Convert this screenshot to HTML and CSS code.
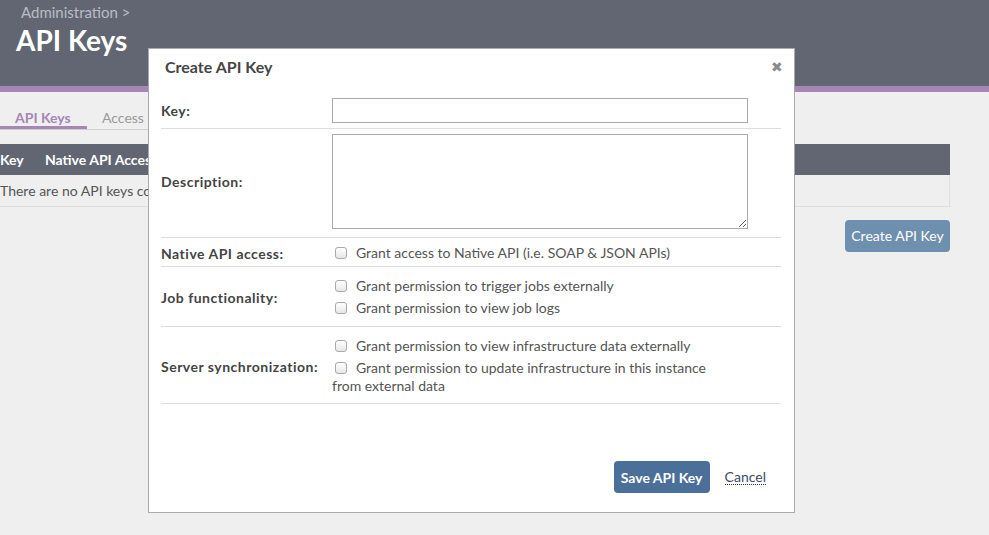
FILE: index.html
```html
<!DOCTYPE html>
<html>
<head>
<meta charset="utf-8">
<link rel="stylesheet" href="styles.css">
</head>
<body>
<header class="page-header">
  <div class="crumb">Administration &gt;</div>
  <h1 class="title">API Keys</h1>
</header>
<main class="page">
  <nav class="tabs">
    <span class="tab active">API Keys</span>
    <span class="tab">Access Control</span>
  </nav>
  <table class="keys">
    <thead>
      <tr><th class="c-key">Key</th><th>Native API Access</th><th></th></tr>
    </thead>
    <tbody>
      <tr><td colspan="3">There are no API keys configured.</td></tr>
    </tbody>
  </table>
  <div class="actions">
    <button class="btn btn-light">Create API Key</button>
  </div>
</main>

<div class="modal">
  <div class="modal-head">
    <span class="modal-title">Create API Key</span>
    <span class="close">&#x2716;</span>
  </div>
  <div class="modal-body">
    <div class="row row-key">
      <label class="lbl">Key:</label>
      <div class="field"><input type="text" class="text-in"></div>
    </div>
    <div class="row row-desc">
      <label class="lbl">Description:</label>
      <div class="field"><textarea class="text-area"></textarea></div>
    </div>
    <div class="row row-native">
      <label class="lbl">Native API access:</label>
      <div class="field">
        <div class="opt"><span class="cb"></span>Grant access to Native API (i.e. SOAP &amp; JSON APIs)</div>
      </div>
    </div>
    <div class="row row-job">
      <label class="lbl">Job functionality:</label>
      <div class="field">
        <div class="opt"><span class="cb"></span>Grant permission to trigger jobs externally</div>
        <div class="opt"><span class="cb"></span>Grant permission to view job logs</div>
      </div>
    </div>
    <div class="row row-sync">
      <label class="lbl">Server synchronization:</label>
      <div class="field">
        <div class="opt"><span class="cb"></span>Grant permission to view infrastructure data externally</div>
        <div class="opt"><span class="cb"></span>Grant permission to update infrastructure in this instance from external data</div>
      </div>
    </div>
  </div>
  <div class="modal-foot">
    <button class="btn btn-dark">Save API Key</button>
    <a class="cancel">Cancel</a>
  </div>
</div>
</body>
</html>
```

FILE: styles.css
```css
* { box-sizing: border-box; }
html, body { margin: 0; padding: 0; }
body {
  width: 989px;
  height: 535px;
  overflow: hidden;
  background: #efefef;
  font-family: Lato, "Liberation Sans", sans-serif;
  font-size: 14px;
  color: #555;
  position: relative;
}

.page-header {
  height: 92px;
  background: #626673;
  border-bottom: 6px solid #a785b5;
  padding: 3px 16px 0;
}
.crumb {
  color: #b9bcc4;
  font-size: 15px;
  padding-left: 5px;
  line-height: 18px;
}
.title {
  margin: 4px 0 0;
  color: #fff;
  font-size: 28px;
  font-weight: 700;
  line-height: 30px;
}

.tabs {
  display: flex;
  margin-top: 16px;
  width: 400px;
  border-bottom: 1px solid #cfcfcf;
  height: 22px;
}
.tab {
  padding: 0 15px;
  color: #999;
  line-height: 19px;
}
.tab.active {
  color: #a785b5;
  font-weight: 700;
  border-bottom: 3px solid #a785b5;
  width: 87px;
  padding-right: 0;
}

.keys {
  margin-top: 14px;
  width: 950px;
  border-collapse: collapse;
}
.keys th {
  background: #626673;
  color: #fff;
  text-align: left;
  font-weight: 700;
  height: 31px;
  padding: 0;
}
.keys th.c-key { width: 45px; }
.keys td {
  height: 31px;
  padding: 0;
  border: 1px solid #dedede;
  border-left: none;
  border-top: none;
  color: #555;
}

.actions {
  width: 950px;
  display: flex;
  justify-content: flex-end;
  margin-top: 13px;
}
.btn {
  border: none;
  border-radius: 4px;
  color: #fff;
  font-family: Lato, "Liberation Sans", sans-serif;
  font-size: 14px;
  height: 32px;
  padding: 0;
}
.btn-light { background: #6f8fae; width: 105px; }
.btn-dark { background: #4a6f98; width: 96px; font-weight: 700; }

.modal {
  position: absolute;
  left: 148px;
  top: 48px;
  width: 647px;
  height: 465px;
  background: #fff;
  border: 1px solid #aaa;
  display: flex;
  flex-direction: column;
}
.modal-head {
  display: flex;
  justify-content: space-between;
  align-items: center;
  height: 35px;
  padding: 0 11px 0 16px;
}
.modal-title {
  font-size: 16px;
  font-weight: 700;
  color: #454545;
}
.close {
  color: #8a8a8a;
  font-size: 14px;
}
.modal-body {
  padding: 9px 13px 0 12px;
}
.row {
  display: flex;
  align-items: center;
  border-bottom: 1px solid #ddd;
  width: 620px;
}
.lbl {
  width: 171px;
  flex: none;
  font-weight: 700;
  color: #444;
  letter-spacing: 0.5px;
}
.field { flex: 1; }
.row-key { padding: 5px 0 5px; }
.text-in {
  display: block;
  width: 416px;
  height: 25px;
  border: 1px solid #aaa;
  margin: 0;
}
.row-desc { padding: 5px 0 8px; }
.text-area {
  display: block;
  width: 416px;
  height: 95px;
  border: 1px solid #aaa;
  margin: 0;
  resize: vertical;
}
.row-native { padding: 4px 0 2px; }
.row-job { padding: 8px 0 7px; }
.row-sync { padding: 8px 0 6px; }
.opt {
  line-height: 18px;
  padding: 2px 0;
  color: #555;
  width: 395px;
}
.cb {
  display: inline-block;
  width: 12px;
  height: 12px;
  border: 1px solid #aaa;
  border-radius: 3px;
  background: linear-gradient(#fff, #e6e6e6);
  margin: 0 9px 0 3px;
  vertical-align: -1px;
}

.modal-foot {
  margin-top: auto;
  display: flex;
  align-items: center;
  padding: 0 28px 19px 0;
  justify-content: flex-end;
  gap: 15px;
}
.cancel {
  color: #3d4a66;
  border-bottom: 1px dotted #333;
  line-height: 15px;
}
```
